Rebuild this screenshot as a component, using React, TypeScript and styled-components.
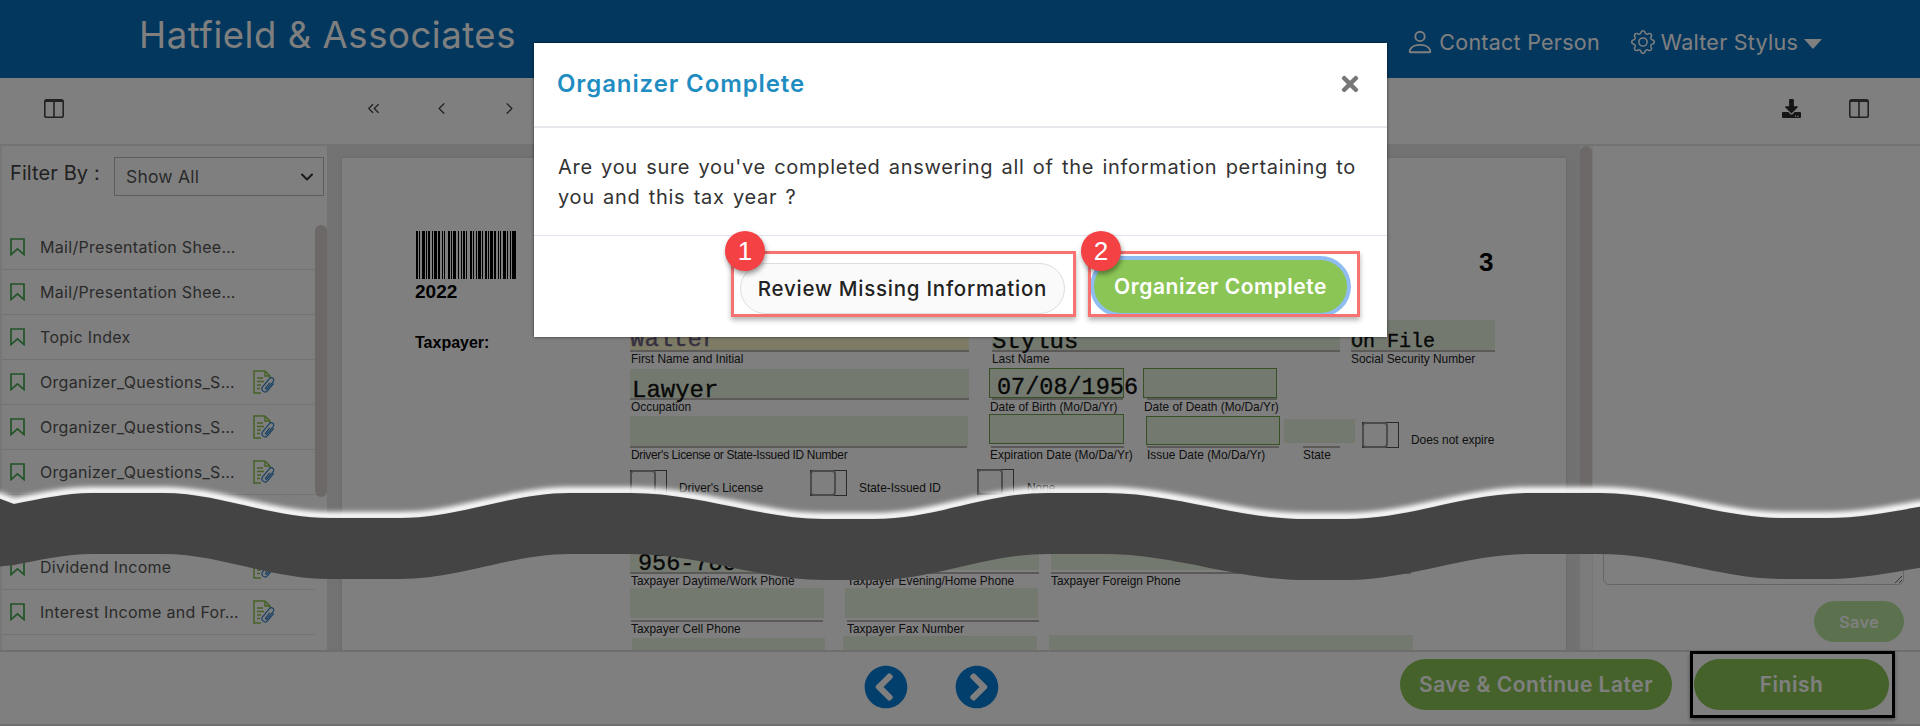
import React from "react";
import styled, { createGlobalStyle } from "styled-components";
import { ChevronDown, ChevronLeft, ChevronRight, ChevronsLeft } from "lucide-react";
import { BsGear, BsPerson } from "react-icons/bs";
import { FaChevronCircleLeft, FaChevronCircleRight, FaDownload, FaTimes } from "react-icons/fa";

const UI = `Inter, "Noto Sans", sans-serif`;
const PDF = `"Liberation Sans", Arial, sans-serif`;
const MONO = `"Liberation Mono", "Courier New", monospace`;
const OX = 342;
const OY = 159;

const Global = createGlobalStyle`
  html, body { margin: 0; padding: 0; height: 726px; overflow: hidden; background: #fff; }
  * { box-sizing: border-box; }
`;

const Shell = styled.div`
  width: 1920px; height: 726px; display: flex; flex-direction: column; position: relative;
  overflow: hidden; font-family: ${UI}; background: #fff;
`;
const Header = styled.header`
  height: 78px; flex: none; background: #066ebc; color: #fff; display: flex; justify-content: space-between;
  padding: 0 98px 0 139px;
`;
const Brand = styled.div`font-size: 36.5px; line-height: 70px; letter-spacing: 0.55px; font-weight: 400;`;
const HeaderRight = styled.div`display: flex; align-items: center; height: 24px; margin-top: 30px; font-size: 21.5px; letter-spacing: 0.25px;`;
const HeaderItem = styled.span`display: flex; align-items: center; gap: ${p => p.$inner}px; margin-left: ${p => p.$gap || 0}px;`;
const Caret = styled.i`display: block; width: 0; height: 0; margin-left: 0; margin-top: 4px; border-style: solid; border-width: 10px 9px 0; border-color: #fff transparent transparent;`;

const Toolbar = styled.div`
  height: 68px; flex: none; display: flex; align-items: center; padding: 0 51px 6px 44px; color: #444;
  border-bottom: 2px solid #e6e6e6;
`;
const NavGroup = styled.div`display: flex; align-items: center; gap: 49px; margin-left: 300px; color: #444;`;
const ToolRight = styled.div`display: flex; align-items: center; gap: 48px; margin-left: auto;`;

const Main = styled.main`flex: 1; min-height: 0; display: flex; border-left: 2px solid #eee; overflow: hidden;`;
const Sidebar = styled.aside`width: 313px; flex: none; display: flex; flex-direction: column; position: relative; z-index: 1;`;
const FilterRow = styled.div`height: 79px; flex: none; display: flex; align-items: flex-start; padding: 9px 0 0 8px;`;
const FilterLabel = styled.label`width: 104px; flex: none; margin-top: 4px; font-size: 20px; line-height: 28px; color: #444; white-space: nowrap; letter-spacing: 0.1px;`;
const SelectBox = styled.div`
  width: 210px; flex: none; height: 39px; margin-top: 2px; border: 1px solid #bbb; display: flex; align-items: center; justify-content: space-between;
  padding: 0 6px 0 11px; font-size: 17.5px; color: #555; letter-spacing: 0.2px;
  svg { color: #333; }
`;
const ScrollTrack = styled.div`width: 12px; flex: none; padding-top: ${p => p.$top}px; background: ${p => p.$bg || "transparent"};`;
const Thumb = styled.div`height: ${p => p.$h}px; background: #d8d0d0; border-radius: 6px;`;
const List = styled.ul`list-style: none; margin: 0; padding: 0;`;
const Row = styled.li`
  height: 45px; display: flex; align-items: center; padding-left: 8px; border-bottom: 1px solid #e4e4e4;
`;
const Gap = styled.li`height: 50px;`;
const RowLabel = styled.span`
  width: 205px; margin-left: 15px; white-space: nowrap;
  font-size: 16px; color: #555; letter-spacing: 0.3px;
`;
const RowIcon = styled.span`display: flex; margin-left: 8px;`;

const DocArea = styled.section`flex: none; width: 1253px; background: #e4e4e4; padding: 12px 15px 0 15px; overflow: hidden;`;
const DocPage = styled.div`position: relative; width: 1224px; height: 600px; background: #fff; box-shadow: 0 0 3px #ccc; overflow: hidden;`;
const Placed = styled.div`position: absolute; left: ${p => p.$x - OX}px; top: ${p => p.$y - OY}px;`;
const Fill = styled(Placed)`
  width: ${p => p.$w}px; height: ${p => p.$h}px;
  background: ${p => (p.$tan ? "#fbf4cd" : "#e6f3df")};
  border: ${p => (p.$edge ? "1px solid #6fa04a" : "none")};
`;
const Rule = styled(Placed)`width: ${p => p.$w}px; height: 2px; background: #b8b2b2;`;
const Caption = styled(Placed)`font: 11.9px/14px ${PDF}; color: #222; white-space: nowrap;`;
const TightCaption = styled(Caption)`letter-spacing: -0.3px;`;
const Strong = styled(Placed)`font: bold ${p => p.$size}px/1 ${PDF}; color: #000;`;
const Typed = styled(Placed)`
  font: normal ${p => p.$size}px/1 ${MONO}; color: ${p => p.$c || "#111"}; white-space: nowrap;
  -webkit-text-stroke: 0.35px currentColor;
`;
const Check = styled(Placed)`
  width: 37px; height: 26px; border: 1px solid #555;
  &::before {
    content: ""; position: absolute; left: -1px; top: -1px; width: 22px; height: 22px;
    border: 2px solid #999; border-radius: 4px;
  }
`;
const Bar = styled(Placed)``;

const RightPanel = styled.aside`
  flex: 1; border-left: 1px solid #eee; display: flex; flex-direction: column; justify-content: flex-end; align-items: flex-end;
  padding: 0 16px 8px 0;
`;
const Notes = styled.textarea`
  width: 301px; height: 55px; border: 1px solid #ccc; border-radius: 6px; background: #fff; display: block; resize: both; outline: none;
`;
const SmallSave = styled.button`
  margin-top: 16px; width: 90px; height: 41px; border: none; border-radius: 21px; background: #b8e59c;
  font: 600 16.5px ${UI}; color: #fff; letter-spacing: .2px; padding: 0;
`;

const Footer = styled.footer`
  height: 76px; flex: none; border-top: 2px solid #dcdcdc; border-bottom: 2px solid #dcdcdc; display: flex; align-items: flex-start; position: relative;
  padding: 7px 31px 0 864px;
`;
const Circles = styled.div`display: flex; gap: 47px; margin-top: 6px; color: #067ed8;`;
const Actions = styled.div`display: flex; gap: 22px; margin-left: auto;`;
const Pill = styled.button`
  height: 51px; width: ${p => p.$w}px; border: none; border-radius: 26px; background: #8ac555; color: #fff;
  font: 600 21px ${UI}; letter-spacing: .5px; padding: 0;
`;
const FinishMark = styled.div`
  position: absolute; left: 1690px; top: -1px; width: 205px; height: 67px; border: 3px solid #000; box-shadow: 0 2px 4px rgba(0,0,0,.4);
`;

const Backdrop = styled.div`position: absolute; inset: 0; z-index: 2; background: rgba(0,0,0,.5);`;
const Modal = styled.div`
  position: absolute; z-index: 3; left: 534px; top: 43px; width: 853px; height: 294px; background: #fff; display: flex; flex-direction: column;
  box-shadow: 0 0 3px rgba(0,0,0,.6);
`;
const ModalHead = styled.div`
  height: 85px; flex: none; border-bottom: 2px solid #e8e8ec; display: flex; align-items: center; justify-content: space-between; padding: 0 25px 2px 23px;
`;
const ModalTitle = styled.h2`margin: 0; font: 600 24px ${UI}; color: #1f8dc2; letter-spacing: .9px;`;
const ModalBody = styled.p`
  margin: 0; height: 108px; flex: none; border-bottom: 1px solid #e4e4f0; padding: 24px 0 0 24px; font-size: 20px; line-height: 30px; color: #333;
  letter-spacing: .7px; word-spacing: 2px; white-space: nowrap;
`;
const ModalFoot = styled.div`flex: 1; position: relative; display: flex; align-items: flex-start; padding: 24px 0 0 206px;`;
const Ghost = styled.button`
  width: 325px; height: 51px; margin-top: 3px; border: 1px solid #ddd; border-radius: 26px; background: #fafafa; color: #222;
  font: 500 20.5px ${UI}; letter-spacing: .75px; padding: 0;
`;
const Primary = styled.button`
  width: 253px; height: 53px; margin-left: 29px; border: none; border-radius: 27px; background: #8ac555; color: #fff;
  box-shadow: 0 0 0 4px #8fbdf2; font: 600 21px ${UI}; letter-spacing: .55px; padding: 0;
`;
const Mark = styled.div`
  position: absolute; left: ${p => p.$x}px; top: 15px; width: ${p => p.$w}px; height: 66px; border: 3px solid #f87272;
  box-shadow: 0 3px 5px rgba(0,0,0,.3); pointer-events: none;
`;
const Badge = styled.div`
  position: absolute; left: ${p => p.$x}px; top: -5px; width: 40px; height: 40px; border-radius: 50%; background: #f44144; color: #fff;
  font: 26px/40px ${PDF}; text-align: center; box-shadow: 1px 3px 5px rgba(0,0,0,.4);
`;
const Tear = styled.svg`position: absolute; z-index: 4; left: 0; top: 0; width: 1920px; height: 726px; pointer-events: none;`;

const SplitIcon = () => (
  <svg width="20" height="19" viewBox="0 0 20 19" fill="none" stroke="#444" strokeWidth="1.6">
    <rect x=".8" y=".8" width="18.4" height="17.4" rx="1.8" />
    <path d="M10 1v17" />
    <path d="M1 2h18" strokeWidth="2" />
  </svg>
);

const BookmarkIcon = () => (
  <svg width="15" height="18" viewBox="0 0 15 18" fill="none" stroke="#45a84e" strokeWidth="1.7" style={{ flex: "none" }}>
    <path d="M1 1h13v15.6L7.5 10.8 1 16.6z" />
  </svg>
);

const FileClip = () => (
  <svg width="23" height="25" viewBox="0 0 23 25" fill="none">
    <path d="M12 1H1v22h7M12 1l5 5v2M12 1v5h5" stroke="#8bc34f" strokeWidth="1.5" />
    <path d="M4 8h6M4 11.5h7M4 15h4M4 18.5h3" stroke="#8bc34f" strokeWidth="1.4" />
    <g transform="translate(16 16) rotate(40)">
      <path
        d="M2 -5V4.5a3.2 3.2 0 0 1 -6.4 0V-6a2.4 2.4 0 0 1 4.8 0V3.5a.9 .9 0 0 1 -1.8 0V-3"
        stroke="#2f7fc4"
        strokeWidth="1.2"
      />
    </g>
  </svg>
);

const BAR_W = [2,1,1,2,3,1,1,1,2,2,1,1,3,1,2,2,1,1,1,3,2,1,1,1,3,2,1,2,1,1,2,1,1,3,2,1,1,2,1,1,3,1,1,2,2,1,1,1,3,1,2,2,1,1,1,2,3,1,1,2,1,1,4];
const Barcode = () => {
  let x = 0;
  const rects: React.ReactNode[] = [];
  BAR_W.forEach((w, i) => {
    if (i % 2 === 0) rects.push(<rect key={i} x={x} y="0" width={w} height="48" fill="#000" />);
    x += w;
  });
  return <svg width="119" height="48" viewBox="0 0 119 48">{rects}</svg>;
};

const FIELDS = [
  { x: 630, y: 321, w: 339, h: 30, tan: true },
  { x: 992, y: 321, w: 348, h: 30 },
  { x: 1351, y: 321, w: 144, h: 30 },
  { x: 630, y: 370, w: 339, h: 29 },
  { x: 989, y: 369, w: 135, h: 30, edge: true },
  { x: 1143, y: 369, w: 134, h: 30, edge: true },
  { x: 630, y: 417, w: 338, h: 30 },
  { x: 989, y: 415, w: 135, h: 30, edge: true },
  { x: 1146, y: 417, w: 134, h: 29, edge: true },
  { x: 1284, y: 420, w: 71, h: 24 },
  { x: 630, y: 540, w: 193, h: 33 },
  { x: 847, y: 540, w: 192, h: 31 },
  { x: 1051, y: 540, w: 360, h: 31 },
  { x: 630, y: 589, w: 194, h: 30 },
  { x: 845, y: 589, w: 193, h: 30 },
  { x: 632, y: 639, w: 193, h: 30 },
  { x: 843, y: 637, w: 194, h: 30 },
  { x: 1049, y: 636, w: 364, h: 30 },
];
const RULES = [
  { x: 630, y: 351, w: 339 }, { x: 992, y: 351, w: 348 }, { x: 1351, y: 351, w: 144 },
  { x: 630, y: 399, w: 339 }, { x: 992, y: 399, w: 131 }, { x: 1147, y: 399, w: 130 },
  { x: 630, y: 447, w: 337 }, { x: 991, y: 447, w: 133 }, { x: 1147, y: 447, w: 132 }, { x: 1303, y: 447, w: 37 },
  { x: 630, y: 573, w: 193 }, { x: 847, y: 573, w: 192 }, { x: 1051, y: 573, w: 360 },
  { x: 631, y: 621, w: 192 }, { x: 847, y: 621, w: 192 },
];
const CAPTIONS: [number, number, string][] = [
  [631, 353, "First Name and Initial"], [992, 353, "Last Name"], [1351, 353, "Social Security Number"],
  [631, 401, "Occupation"], [990, 401, "Date of Birth (Mo/Da/Yr)"], [1144, 401, "Date of Death (Mo/Da/Yr)"],
  [990, 449, "Expiration Date (Mo/Da/Yr)"],
  [1147, 449, "Issue Date (Mo/Da/Yr)"], [1303, 449, "State"], [1411, 434, "Does not expire"],
  [679, 482, "Driver's License"], [859, 482, "State-Issued ID"], [1027, 482, "None"],
  [631, 575, "Taxpayer Daytime/Work Phone"], [847, 575, "Taxpayer Evening/Home Phone"], [1051, 575, "Taxpayer Foreign Phone"],
  [631, 623, "Taxpayer Cell Phone"], [847, 623, "Taxpayer Fax Number"],
];
const CHECKS = [[1362, 423], [630, 471], [810, 471], [977, 470]];

const ROWS_TOP = [
  ["Mail/Presentation Shee…", false],
  ["Mail/Presentation Shee…", false],
  ["Topic Index", false],
  ["Organizer_Questions_S…", true],
  ["Organizer_Questions_S…", true],
  ["Organizer_Questions_S…", true],
] as [string, boolean][];
const ROWS_BOTTOM = [
  ["Dividend Income", true],
  ["Interest Income and For…", true],
] as [string, boolean][];

const SideRow = ({ label, clip }: { label: string; clip: boolean }) => (
  <Row>
    <BookmarkIcon />
    <RowLabel>{label}</RowLabel>
    {clip && <RowIcon><FileClip /></RowIcon>}
  </Row>
);

const TOP_EDGE =
  "M-5,497 L14,504 C40,499 65,493 92,493 L163,493 C220,493 270,518 330,518 L400,518 C460,518 510,493 570,493 L630,493 C700,493 760,519 824,519 L875,519 C935,519 985,493 1048,493 L1105,493 C1175,493 1235,519 1306,519 L1346,519 C1410,519 1465,493 1531,493 L1600,493 C1665,493 1720,518 1783,518 L1829,518 C1860,518 1890,512 1925,506";
const TEAR =
  TOP_EDGE +
  " L1925,567 C1890,573 1860,579 1829,579 L1783,579 C1720,579 1665,554 1600,554 L1531,554 C1465,554 1410,580 1346,580 L1306,580 C1235,580 1175,554 1105,554 L1048,554 C985,554 935,580 875,580 L824,580 C760,580 700,554 630,554 L570,554 C510,554 460,579 400,579 L330,579 C270,579 220,554 163,554 L92,554 C65,554 40,560 14,565 L-5,567 Z";

export default function App() {
  return (
    <Shell>
      <Global />
      <Header>
        <Brand>Hatfield &amp; Associates</Brand>
        <HeaderRight>
          <HeaderItem $inner={4}><BsPerson size={30} />Contact Person</HeaderItem>
          <HeaderItem $inner={6} $gap={31}><BsGear size={24} />Walter Stylus<Caret /></HeaderItem>
        </HeaderRight>
      </Header>
      <Toolbar>
        <SplitIcon />
        <NavGroup>
          <ChevronsLeft size={19} strokeWidth={1.6} />
          <ChevronLeft size={19} strokeWidth={1.6} />
          <ChevronRight size={19} strokeWidth={1.6} />
        </NavGroup>
        <ToolRight>
          <FaDownload size={19} color="#2a2a2a" />
          <SplitIcon />
        </ToolRight>
      </Toolbar>
      <Main>
        <Sidebar>
          <FilterRow>
            <FilterLabel>Filter By :</FilterLabel>
            <SelectBox>Show All<ChevronDown size={20} strokeWidth={2.4} /></SelectBox>
          </FilterRow>
          <List>
            {ROWS_TOP.map(([l, c], i) => <SideRow key={i} label={l} clip={c} />)}
            <Gap />
            {ROWS_BOTTOM.map(([l, c], i) => <SideRow key={i} label={l} clip={c} />)}
          </List>
        </Sidebar>
        <ScrollTrack $top={79}><Thumb $h={272} /></ScrollTrack>
        <DocArea>
          <DocPage>
            <Bar $x={416} $y={232}><Barcode /></Bar>
            <Strong $x={415} $y={283} $size={19}>2022</Strong>
            <Strong $x={415} $y={336} $size={16}>Taxpayer:</Strong>
            <Strong $x={1479} $y={250} $size={26}>3</Strong>
            {FIELDS.map((f, i) => <Fill key={i} $x={f.x} $y={f.y} $w={f.w} $h={f.h} $tan={f.tan} $edge={f.edge} />)}
            {RULES.map((r, i) => <Rule key={i} $x={r.x} $y={r.y} $w={r.w} />)}
            {CAPTIONS.map(([x, y, t], i) => <Caption key={i} $x={x} $y={y}>{t}</Caption>)}
            <TightCaption $x={631} $y={449}>Driver's License or State-Issued ID Number</TightCaption>
            {CHECKS.map(([x, y], i) => <Check key={i} $x={x} $y={y} />)}
            <Typed $x={630} $y={329} $size={24} $c="#6a6080">Walter</Typed>
            <Typed $x={992} $y={331} $size={24}>Stylus</Typed>
            <Typed $x={1351} $y={333} $size={20}>On File</Typed>
            <Typed $x={632} $y={380} $size={24}>Lawyer</Typed>
            <Typed $x={997} $y={377} $size={23.5}>07/08/1956</Typed>
            <Typed $x={638} $y={553} $size={23.5}>956-780</Typed>
          </DocPage>
        </DocArea>
        <ScrollTrack $top={0} $bg="#f6f6f6"><Thumb $h={360} /></ScrollTrack>
        <RightPanel>
          <Notes readOnly />
          <SmallSave>Save</SmallSave>
        </RightPanel>
      </Main>
      <Footer>
        <Circles>
          <FaChevronCircleLeft size={44} />
          <FaChevronCircleRight size={44} />
        </Circles>
        <Actions>
          <Pill $w={272}>Save &amp; Continue Later</Pill>
          <Pill $w={195}>Finish</Pill>
        </Actions>
        <FinishMark />
      </Footer>
      <Backdrop />
      <Modal>
        <ModalHead>
          <ModalTitle>Organizer Complete</ModalTitle>
          <FaTimes size={24} color="#777" />
        </ModalHead>
        <ModalBody>Are you sure you've completed answering all of the information pertaining to<br />you and this tax year ?</ModalBody>
        <ModalFoot>
          <Ghost>Review Missing Information</Ghost>
          <Primary>Organizer Complete</Primary>
          <Mark $x={197} $w={345} />
          <Mark $x={554} $w={272} />
          <Badge $x={191}>1</Badge>
          <Badge $x={547}>2</Badge>
        </ModalFoot>
      </Modal>
      <Tear viewBox="0 0 1920 726" aria-hidden="true">
        <defs>
          <filter id="glow" x="-5%" y="-50%" width="110%" height="200%">
            <feGaussianBlur stdDeviation="2.4" />
          </filter>
        </defs>
        <path d={TOP_EDGE} fill="none" stroke="#fff" strokeWidth="8" filter="url(#glow)" transform="translate(0,-2)" />
        <path d={TEAR} fill="#444" />
      </Tear>
    </Shell>
  );
}
